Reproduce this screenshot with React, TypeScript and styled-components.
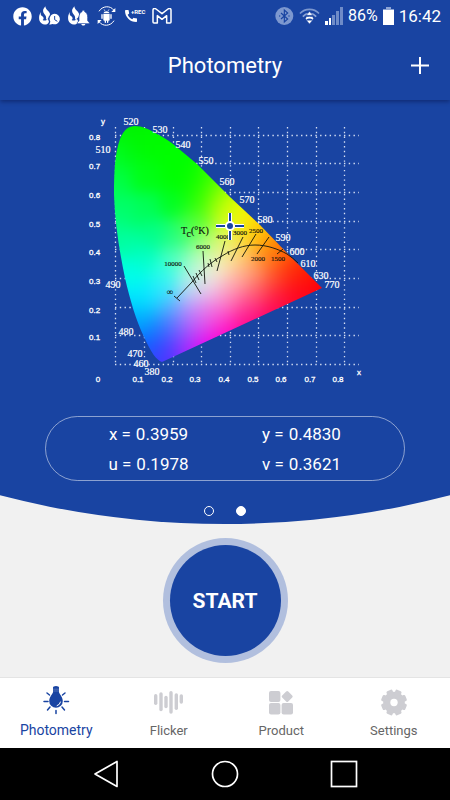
import React from "react";
import styled, { createGlobalStyle } from "styled-components";
import { FaFacebook } from "react-icons/fa";
import { MdCall } from "react-icons/md";

const BLUE = "#1944a2";
const GREY = "#cdcdd2";

const GlobalStyle = createGlobalStyle`
  * { box-sizing: border-box; }
  body { margin: 0; background: #f1f1f1; font-family: Roboto, "Liberation Sans", sans-serif; }
  button { font-family: inherit; border: 0; padding: 0; background: none; cursor: pointer; }
`;

const Page = styled.div`
  min-height: 100vh;
  display: flex;
  flex-direction: column;
`;

const TopBar = styled.header`
  background: ${BLUE};
  color: #fff;
  box-shadow: 0 2px 4px rgba(0, 0, 40, 0.35);
  z-index: 1;
`;

const StatusBar = styled.div`
  height: 32px;
  padding: 0 9px 0 13px;
  display: flex;
  align-items: center;
  justify-content: space-between;
`;

const StatusGroup = styled.div<{ $gap: number }>`
  display: flex;
  align-items: center;
  gap: ${(p) => p.$gap}px;
  svg { display: block; }
`;

const StatusText = styled.span<{ $size: number }>`
  font-size: ${(p) => p.$size}px;
  line-height: 20px;
`;

const TitleBar = styled.div`
  height: 68px;
  padding: 0 18px;
  display: grid;
  grid-template-columns: 24px 1fr 24px;
  align-items: center;
`;

const Title = styled.h1`
  grid-column: 2;
  margin: 0;
  font-size: 22px;
  line-height: 28px;
  font-weight: 400;
  text-align: center;
`;

const AddButton = styled.button`
  width: 24px;
  height: 24px;
  color: #fff;
  svg { display: block; }
`;

const Hero = styled.section`
  background: ${BLUE};
  color: #fff;
  display: flex;
  flex-direction: column;
  align-items: center;
  padding: 10px 45px 5px;
  clip-path: ellipse(200% 902px at 50% calc(100% - 902px));
`;

const Chart = styled.svg`
  display: block;
  width: 290px;
  height: 280px;
`;

const Readings = styled.dl`
  width: 100%;
  margin: 26px 0 0;
  padding: 2px 26px 1px;
  border: 1px solid rgba(255, 255, 255, 0.5);
  border-radius: 33px;
  display: grid;
  grid-template-columns: 1fr 1fr;
`;

const Reading = styled.div`
  display: flex;
  justify-content: center;
  gap: 5px;
  font-size: 17px;
  line-height: 30px;
  dt, dd { margin: 0; }
`;

const Pager = styled.div`
  margin-top: 22px;
  display: flex;
  gap: 16px;
`;

const PageDot = styled.button<{ $on?: boolean }>`
  width: 16px;
  height: 16px;
  display: grid;
  place-items: center;
  &::before {
    content: "";
    width: 8px;
    height: 8px;
    border-radius: 50%;
    border: 1px solid #fff;
    background: ${(p) => (p.$on ? "#fff" : "transparent")};
  }
`;

const Action = styled.main`
  flex: 1;
  display: grid;
  place-items: center;
`;

const StartButton = styled.button`
  width: 111px;
  height: 111px;
  border-radius: 50%;
  box-shadow: 0 0 0 7px #b1bfde;
  background: ${BLUE};
  color: #fff;
  font-size: 21px;
  font-weight: 700;
`;

const Tabs = styled.nav`
  height: 71px;
  background: #fff;
  border-top: 1px solid #e4e4e4;
  display: grid;
  grid-template-columns: repeat(4, 1fr);
`;

const Tab = styled.a<{ $active?: boolean }>`
  display: flex;
  flex-direction: column;
  align-items: center;
  padding-top: 8px;
  gap: ${(p) => (p.$active ? 5 : 6)}px;
  text-decoration: none;
  font-size: ${(p) => (p.$active ? 14 : 13)}px;
  line-height: 18px;
  color: ${(p) => (p.$active ? BLUE : "#666")};
  svg { display: block; }
`;

const SystemBar = styled.footer`
  height: 52px;
  padding: 0 46px;
  background: #000;
  display: grid;
  grid-template-columns: repeat(3, 1fr);
  place-items: center;
`;

const SystemButton = styled.button`
  width: 40px;
  height: 40px;
  svg { display: block; margin: auto; }
`;

const CallBox = styled.span`
  display: flex;
  align-items: flex-start;
  width: 22px;
  height: 16px;
  svg { flex: none; }
`;

const RecordTag = styled.small`
  margin-left: -8px;
  font-size: 6px;
  line-height: 8px;
  font-weight: 700;
`;

/* ---------- status icons ---------- */

const FlameShape = () => (
  <>
    <path d="M19 1c-6 7-8 12-6 18 2 7 11 9 8 22 10-4 14-12 12-18C30 15 20 12 19 1z" />
    <path d="M6 18c-2 6-1 10 4 13 5 4 5 8 1 11 4 3 12 2 14-3 6 2 7 9 1 14-9 6-22 1-25-10C-1 32 1 25 6 18z" />
  </>
);

const FlameClock = () => (
  <svg width="22" height="20" viewBox="0 0 66 60" fill="#fff">
    <FlameShape />
    <circle cx="47" cy="39" r="19" fill={BLUE} />
    <path d="M47 23a16 16 0 1 1-6 31l-10 2 3-9a16 16 0 0 1 13-24z" />
    <path d="M47 30v11l8 5" fill="none" stroke={BLUE} strokeWidth="3" />
  </svg>
);

const FlameBell = () => (
  <svg width="22" height="20" viewBox="0 0 66 60" fill="#fff">
    <FlameShape />
    <path
      d="M46 13c-3 0-3 2-4 4-6 2-9 9-9 17v10l-5 6v3h36v-3l-5-6V34c0-8-3-15-9-17 0-2-1-4-4-4z"
      stroke={BLUE}
      strokeWidth="2"
    />
    <path d="M40 54h12c-1 6-11 6-12 0z" />
  </svg>
);

const AndroidSync = () => (
  <svg width="19" height="20" viewBox="0 0 57 60" fill="#fff">
    <path d="M19 22a10 9 0 0 1 19 0zM19 24h19v17a3 3 0 0 1-3 3H22a3 3 0 0 1-3-3z" />
    <path d="M15 26v11M42 26v11M25 44v5M32 44v5" stroke="#fff" strokeWidth="4" strokeLinecap="round" />
    <path d="M21 10l3 5M36 10l-3 5" stroke="#fff" strokeWidth="2" />
    <path d="M6 16C16-1 40-2 50 12M51 44C41 61 17 62 7 48" fill="none" stroke="#fff" strokeWidth="3" />
    <path d="M55 6v12H43zM2 54V42h12z" />
  </svg>
);

const CallRecord = () => (
  <CallBox>
    <MdCall size={16} />
    <RecordTag>+REC</RecordTag>
  </CallBox>
);

const Mail = () => (
  <svg width="20" height="16" viewBox="0 0 60 48" fill="none" stroke="#fff" strokeWidth="4.5" strokeLinejoin="round">
    <path d="M3 6C3 1 8 0 12 3l18 14L48 3c4-3 9-2 9 3v36c0 2-1 3-3 3H44V23L30 34 16 23v22H6c-2 0-3-1-3-3z" />
  </svg>
);

const Bluetooth = () => (
  <svg width="19" height="18" viewBox="0 0 57 54">
    <circle cx="28" cy="27" r="27" fill="#7d98cf" />
    <path d="M18 18l20 18-10 9V9l10 9-20 18" fill="none" stroke={BLUE} strokeWidth="3.500" />
    <circle cx="14" cy="27" r="2" fill={BLUE} />
    <circle cx="42" cy="27" r="2" fill={BLUE} />
  </svg>
);

const Wifi = () => (
  <svg width="21" height="18" viewBox="0 0 66 54" fill="none">
    <path d="M3 19C19 2 47 2 63 19" stroke="#7d98cf" strokeWidth="5" />
    <path d="M12 29c11-13 31-13 42 0" stroke="#8ea5d6" strokeWidth="5" />
    <path d="M22 37c6-7 16-7 22 0" stroke="#fff" strokeWidth="5" />
    <path d="M33 13l10 12H23zM33 52l-10-12h20z" fill="#fff" stroke={BLUE} strokeWidth="1.5" />
    <path d="M23 32h20" stroke="#fff" strokeWidth="5" />
  </svg>
);

const Signal = () => (
  <svg width="18" height="18" viewBox="0 0 18 18">
    <path d="M0 14h3v4H0zM4 11h2v7H4z" fill="#fff" />
    <path d="M7 8h3v10H7zM11 4h3v14h-3zM15 0h3v18h-3z" fill="#6f8cc8" />
  </svg>
);

const Battery = () => (
  <svg width="11" height="18" viewBox="0 0 11 18">
    <path d="M3 0h5v2h3v3H0V2h3z" fill="#8ca3d4" />
    <path d="M0 3h11v15H0z" fill="#fff" />
  </svg>
);

/* ---------- chromaticity chart ---------- */

type Sample = [number, number, number, number, number];

const samples: Sample[] = [
  [135, 118, 0, 240, 0], [110, 130, 0, 245, 10], [160, 125, 0, 250, 0], [108, 160, 0, 255, 45],
  [108, 200, 0, 255, 95], [108, 235, 0, 255, 150], [185, 145, 0, 255, 0], [215, 172, 60, 255, 0],
  [135, 132, 0, 245, 0], [125, 150, 0, 250, 20], [150, 145, 0, 252, 0], [175, 155, 0, 255, 0],
  [180, 178, 0, 255, 0], [117, 180, 0, 255, 70], [145, 175, 0, 255, 20], [200, 178, 10, 255, 0],
  [200, 198, 30, 255, 0], [120, 215, 0, 255, 115], [145, 210, 0, 255, 85], [175, 205, 0, 255, 35],
  [198, 218, 70, 255, 25], [214, 190, 110, 255, 0], [226, 194, 180, 255, 0], [218, 212, 180, 255, 15],
  [234, 208, 225, 255, 0], [232, 226, 232, 250, 40], [246, 212, 255, 240, 0], [257, 224, 255, 218, 0],
  [252, 238, 255, 205, 30], [268, 234, 255, 170, 0], [275, 245, 255, 130, 0], [288, 252, 255, 85, 0],
  [268, 258, 255, 130, 30], [290, 270, 255, 50, 10], [305, 270, 255, 30, 0], [320, 288, 255, 0, 10],
  [296, 288, 255, 10, 20], [298, 303, 255, 0, 40], [275, 280, 255, 80, 50], [278, 300, 255, 20, 70],
  [272, 316, 255, 0, 100], [255, 293, 255, 90, 110], [252, 272, 255, 155, 110], [240, 256, 255, 210, 110],
  [225, 245, 235, 245, 120], [208, 240, 180, 255, 110], [192, 232, 90, 255, 100], [175, 235, 25, 255, 120],
  [150, 235, 0, 255, 140], [123, 245, 0, 255, 165], [145, 258, 0, 255, 195], [175, 258, 80, 255, 185],
  [198, 258, 175, 255, 185], [222, 263, 250, 240, 190], [208, 275, 240, 240, 225], [190, 276, 170, 250, 230],
  [165, 275, 40, 255, 235], [133, 275, 0, 255, 235], [112, 270, 0, 255, 225], [145, 295, 0, 235, 255],
  [120, 300, 0, 225, 255], [165, 293, 60, 225, 255], [190, 293, 185, 210, 250], [210, 290, 240, 200, 235],
  [235, 280, 255, 180, 175], [230, 298, 255, 135, 185], [210, 308, 240, 130, 230], [190, 312, 190, 140, 255],
  [170, 312, 80, 165, 255], [145, 315, 0, 190, 255], [128, 325, 0, 160, 255], [148, 334, 0, 130, 255],
  [165, 330, 50, 110, 255], [182, 330, 140, 90, 255], [200, 325, 215, 75, 245], [220, 320, 255, 60, 205],
  [245, 310, 255, 50, 150], [250, 325, 255, 0, 130], [228, 335, 255, 0, 195], [208, 345, 240, 0, 240],
  [188, 350, 180, 35, 255], [170, 350, 95, 50, 255], [157, 350, 40, 75, 255], [162, 365, 75, 50, 255],
  [142, 352, 10, 90, 255],
];

const CELL = 5;

/* Gaussian-weighted mean of the samples around a point */
const fieldColor = (x: number, y: number) => {
  let total = 0;
  const sum = [0, 0, 0];
  for (const [sx, sy, r, g, b] of samples) {
    const d2 = (sx - x) ** 2 + (sy - y) ** 2;
    const w = Math.exp(-d2 / 260) + 1e-9 / (d2 + 1);
    total += w;
    sum[0] += r * w;
    sum[1] += g * w;
    sum[2] += b * w;
  }
  return `rgb(${sum.map((v) => Math.round(v / total)).join(",")})`;
};

const cells: { x: number; y: number; fill: string }[] = [];
for (let y = 110; y < 380; y += CELL) {
  for (let x = 100; x < 340; x += CELL) {
    cells.push({ x, y, fill: fieldColor(x + CELL / 2, y + CELL / 2) });
  }
}

const gridX = [115, 144, 173, 201, 230, 258, 287, 316, 344];
const gridY = [135, 163, 192, 221, 249, 278, 307, 335, 364];

const yTicks: [string, number][] = [
  ["0.8", 140], ["0.7", 169], ["0.6", 198], ["0.5", 227], ["0.4", 255], ["0.3", 284], ["0.2", 313], ["0.1", 340],
];
const xTicks: [string, number][] = [
  ["0", 98], ["0.1", 138], ["0.2", 167], ["0.3", 195], ["0.4", 224], ["0.5", 253], ["0.6", 281], ["0.7", 310], ["0.8", 338],
];
const wavelengths: [string, number, number][] = [
  ["520", 131, 125], ["510", 103, 153], ["530", 160, 133], ["540", 183, 148], ["550", 206, 164],
  ["560", 227, 185], ["570", 247, 203], ["580", 265, 223], ["590", 283, 241], ["600", 297, 255],
  ["610", 308, 267], ["630", 321, 279], ["770", 332, 288], ["490", 113, 288], ["480", 126, 335],
  ["470", 135, 357], ["460", 141, 367], ["380", 152, 375],
];
const temperatures: [string, number, number][] = [
  ["10000", 173, 266], ["6000", 203, 249], ["4000", 223, 239], ["3000", 240, 235],
  ["2500", 256, 233], ["2000", 258, 261], ["1500", 278, 261],
];

const LOCUS =
  "M162 362C156 360 151 352 144 337C136 320 130 300 125 278C120 254 115 225 114 195C114 170 115 153 120 139C124 129 129 126 135 126C142 126 149 129 157 134C163 137 168 140 173 144L197 164L230 197L260 225L287 253L322 288Z";

const ChromaticityChart = () => (
  <Chart viewBox="80 110 290 280" role="img" aria-label="CIE chromaticity diagram">
    <defs>
      <clipPath id="locus"><path d={LOCUS} /></clipPath>
      <filter id="blend" x="-5%" y="-5%" width="110%" height="110%" colorInterpolationFilters="sRGB">
        <feGaussianBlur stdDeviation="3" />
      </filter>
    </defs>
    <g stroke="#d5dff3" strokeWidth="1.3" strokeDasharray="1.4 3.37">
      {gridX.map((x) => <line key={x} x1={x + 0.5} x2={x + 0.5} y1="127" y2="365" />)}
      {gridY.map((y) => <line key={y} y1={y + 0.5} y2={y + 0.5} x1="115" x2="359" />)}
    </g>
    <g clipPath="url(#locus)">
      <g filter="url(#blend)">
        {cells.map((c) => (
          <rect key={`${c.x}-${c.y}`} x={c.x} y={c.y} width={CELL} height={CELL} fill={c.fill} />
        ))}
      </g>
    </g>
    <g
      fill="#fff"
      stroke="#fff"
      strokeWidth=".3"
      fontFamily="'Liberation Sans', sans-serif"
      fontSize="8"
    >
      {yTicks.map(([t, y]) => <text key={t} x="89" y={y}>{t}</text>)}
      <g textAnchor="middle">
        {xTicks.map(([t, x]) => <text key={t} x={x} y="382">{t}</text>)}
        <text x="103" y="124">y</text>
        <text x="359" y="375">x</text>
      </g>
    </g>
    <g fill="#fff" stroke="#fff" strokeWidth=".2" fontFamily="'Liberation Serif', serif" fontSize="10" textAnchor="middle">
      {wavelengths.map(([t, x, y]) => <text key={t} x={x} y={y}>{t}</text>)}
    </g>
    <g fill="#10140c" stroke="#10140c" strokeWidth=".15" fontFamily="'Liberation Serif', serif" fontSize="7" textAnchor="middle">
      {temperatures.map(([t, x, y]) => <text key={t} x={x} y={y}>{t}</text>)}
      <text x="170" y="295" fontSize="9">∞</text>
      <text x="181" y="234" fontSize="10" textAnchor="start">
        T<tspan dy="3">c</tspan><tspan dy="-3">(°K)</tspan>
      </text>
    </g>
    <g fill="none" stroke="#10140c" strokeWidth=".9">
      <path d="M177 298L192 282C201 271 211 262 222 256C233 249 244 245 255 245C267 245 278 249 287 254Q293 258 298 263" />
      <path d="M174 296l6 5M184 266l17 28M203 251l2 33M225 241l-8 30M243 237l-12 24M256 234l-14 23M269 237l-12 17M283 249l-6 5" />
      <path d="M193 276l3 7M196 273l3 7M199 270l3 6M208 263l1 4M210 259l2 8M215 258l2 4M228 251l1 4" />
    </g>
    <g fill="none">
      <path d="M230 213v9M230 231v9M216 226h9M235 226h9" stroke="#fff" strokeWidth="4" />
      <path d="M230 213v9M230 231v9M216 226h9M235 226h9" stroke={BLUE} strokeWidth="2" />
      <circle cx="230" cy="226" r="4" fill={BLUE} stroke="#fff" strokeWidth="2" />
    </g>
  </Chart>
);

/* ---------- tab icons ---------- */

const BulbIcon = () => (
  <svg width="30" height="30" viewBox="0 0 30 30" fill={BLUE}>
    <path d="M12 1.600Q12 0 15 0t3 1.600V6c0 2 3.800 4.500 3.800 9a6.800 6.800 0 0 1-13.600 0c0-4.500 3.800-7 3.800-9z" />
    <path d="M12 3.200h6M12 5h6" stroke="#7890c8" strokeWidth=".6" />
    <path d="M19.500 16a4.800 4.800 0 0 1-3.400 3.700" fill="none" stroke="#fff" strokeWidth="1" strokeLinecap="round" />
    <path
      d="M3 15.500h4M23.500 15.500h4M15 24.500v3M6 7l2.500 2M24 7l-2.500 2M6.500 24l2.500-3M23.500 24l-2.500-3"
      stroke={BLUE}
      strokeWidth="1.500"
      strokeLinecap="round"
    />
  </svg>
);

const bars: [number, number, number][] = [
  [1.7, 5, 16], [7, 3.3, 22.3], [12, 6.7, 19.3], [17, 2, 24.7], [22.3, 4.3, 21], [27.3, 5.3, 14.7],
];

const FlickerIcon = () => (
  <svg width="30" height="30" viewBox="0 -3 30 30" stroke={GREY} strokeWidth="3.4" strokeLinecap="round">
    {bars.map(([x, top, bottom]) => <line key={x} x1={x} x2={x} y1={top + 1.7} y2={bottom - 1.7} />)}
  </svg>
);

const ProductIcon = () => (
  <svg width="30" height="30" viewBox="0 0 30 30" fill={GREY}>
    <rect x="3" y="5" width="11.400" height="11" rx="2" />
    <rect x="3" y="17" width="11.400" height="11.400" rx="2" />
    <rect x="15.600" y="17" width="11.400" height="11.400" rx="2" />
    <rect x="16.900" y="6.200" width="8.600" height="8.600" rx="1.500" transform="rotate(45 21.200 10.500)" />
  </svg>
);

const GearIcon = () => (
  <svg width="30" height="30" viewBox="0 0 30 30" fill={GREY}>
    <circle cx="15" cy="16.500" r="10.800" />
    {[0, 1, 2, 3].map((i) => (
      <rect key={i} x="11.800" y="3.500" width="6.400" height="26" rx="1.300" transform={`rotate(${i * 45 + 22.5} 15 16.500)`} />
    ))}
    <circle cx="15" cy="16.500" r="3.700" fill="#fff" />
  </svg>
);

const tabs = [
  { label: "Photometry", Icon: BulbIcon },
  { label: "Flicker", Icon: FlickerIcon },
  { label: "Product", Icon: ProductIcon },
  { label: "Settings", Icon: GearIcon },
];

const readings = [
  ["x", "0.3959"],
  ["y", "0.4830"],
  ["u", "0.1978"],
  ["v", "0.3621"],
];

export default function App() {
  return (
    <Page>
      <GlobalStyle />
      <TopBar>
        <StatusBar>
          <StatusGroup $gap={7}>
            <FaFacebook size={19} />
            <FlameClock />
            <FlameBell />
            <AndroidSync />
            <CallRecord />
            <Mail />
          </StatusGroup>
          <StatusGroup $gap={5}>
            <Bluetooth />
            <Wifi />
            <Signal />
            <StatusText $size={16}>86%</StatusText>
            <Battery />
            <StatusText $size={17}>16:42</StatusText>
          </StatusGroup>
        </StatusBar>
        <TitleBar>
          <Title>Photometry</Title>
          <AddButton aria-label="Add">
            <svg width="24" height="24" viewBox="0 0 24 24" stroke="#fff" strokeWidth="2">
              <path d="M12 3v17M3 11.500h18" />
            </svg>
          </AddButton>
        </TitleBar>
      </TopBar>
      <Hero>
        <ChromaticityChart />
        <Readings>
          {readings.map(([name, value]) => (
            <Reading key={name}>
              <dt>{name} =</dt>
              <dd>{value}</dd>
            </Reading>
          ))}
        </Readings>
        <Pager>
          <PageDot aria-label="Page 1" />
          <PageDot aria-label="Page 2" $on />
        </Pager>
      </Hero>
      <Action>
        <StartButton>START</StartButton>
      </Action>
      <Tabs>
        {tabs.map(({ label, Icon }, i) => (
          <Tab key={label} href={`#${label.toLowerCase()}`} $active={i === 0}>
            <Icon />
            {label}
          </Tab>
        ))}
      </Tabs>
      <SystemBar>
        <SystemButton aria-label="Back">
          <svg width="28" height="28" viewBox="0 0 28 28" fill="none" stroke="#fff" strokeWidth="1.700" strokeLinejoin="round">
            <path d="M3 14L25 1.500v25z" />
          </svg>
        </SystemButton>
        <SystemButton aria-label="Home">
          <svg width="28" height="28" viewBox="0 0 28 28" fill="none" stroke="#fff" strokeWidth="1.700">
            <circle cx="14" cy="14" r="12.500" />
          </svg>
        </SystemButton>
        <SystemButton aria-label="Recent apps">
          <svg width="28" height="28" viewBox="0 0 28 28" fill="none" stroke="#fff" strokeWidth="1.700">
            <rect x="1.500" y="1.500" width="25" height="25" />
          </svg>
        </SystemButton>
      </SystemBar>
    </Page>
  );
}
